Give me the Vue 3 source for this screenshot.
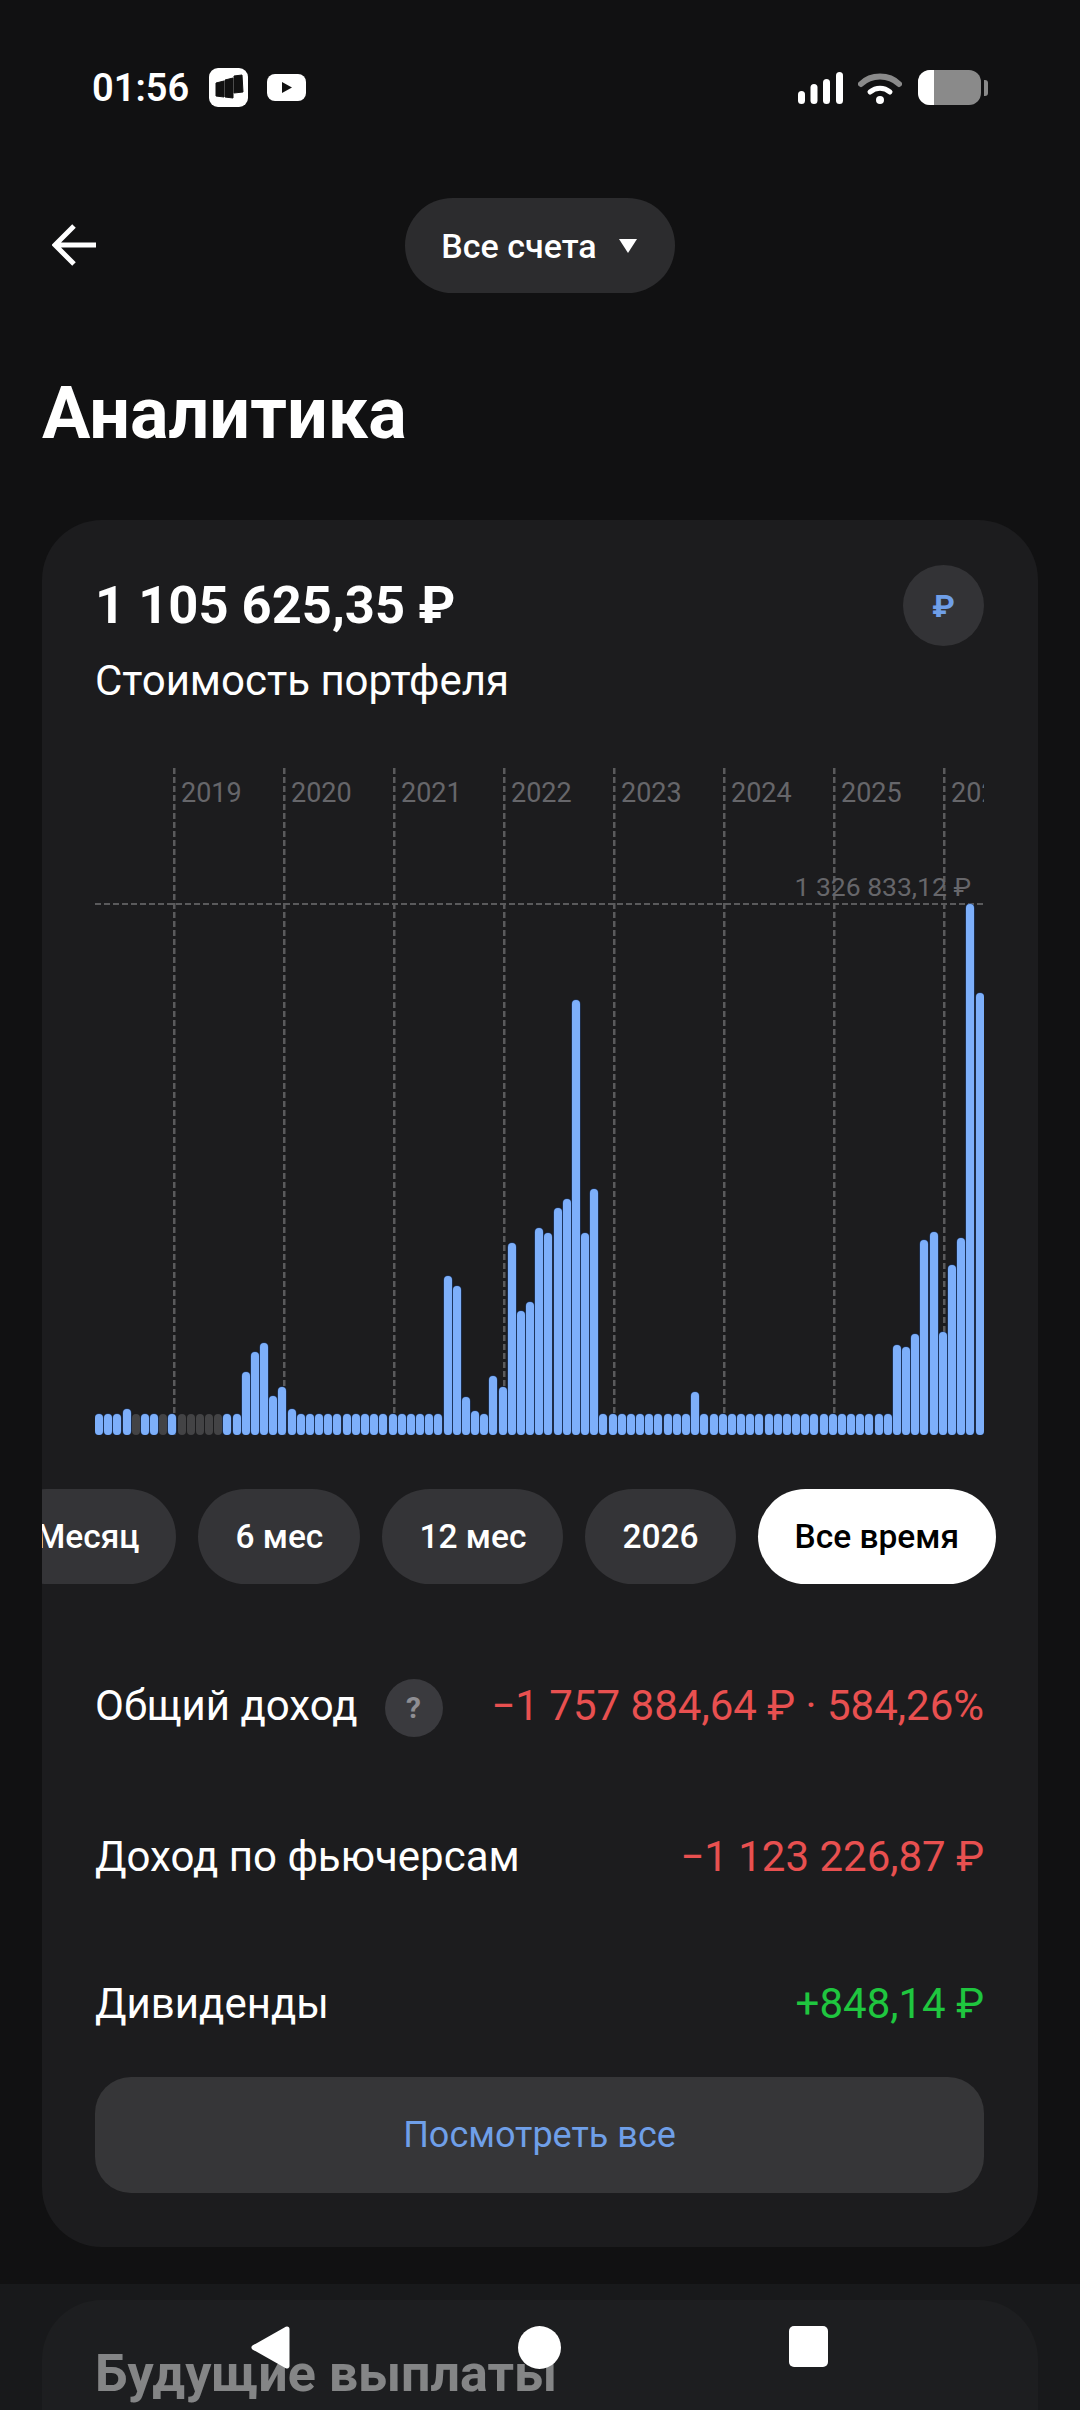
<template>
  <div class="page">
    <div class="status">
      <div class="status-left">
        <span class="time">01:56</span>
        <svg class="app-icon" width="39" height="39" viewBox="0 0 39 39">
          <rect width="39" height="39" rx="9" fill="#fff" />
          <path d="M7 15l8-2v16l-8-1zM16 12l8-2v20l-8-1zM25 8l8-1 1 17-9 1z" fill="#111" stroke="#111" stroke-linejoin="round" />
        </svg>
        <svg class="yt-icon" width="39" height="27" viewBox="0 0 39 27">
          <rect width="39" height="27" rx="8" fill="#fff" />
          <path d="M15 8l10 5.500-10 5.500z" fill="#111" />
        </svg>
      </div>
      <div class="status-right">
        <svg width="46" height="32" viewBox="0 0 46 32">
          <rect x="0" y="19" width="7" height="13" rx="3.500" fill="#fff" />
          <rect x="12.500" y="12" width="7" height="20" rx="3.500" fill="#fff" />
          <rect x="25" y="7" width="7" height="25" rx="3.500" fill="#fff" />
          <rect x="38" y="0" width="7" height="32" rx="3.500" fill="#fff" />
        </svg>
        <svg width="44" height="32" viewBox="0 0 44 32">
          <path d="M3 12C13 2 31 2 41 12" fill="none" stroke="#8a8a8a" stroke-width="6" stroke-linecap="round" />
          <path d="M12 20c6-5 14-5 20 0" fill="none" stroke="#fff" stroke-width="5" stroke-linecap="round" />
          <circle cx="22" cy="28" r="4" fill="#fff" />
        </svg>
        <div class="battery">
          <div class="battery-body"><div class="battery-fill"></div></div>
          <div class="battery-nub"></div>
        </div>
      </div>
    </div>

    <header class="header">
      <svg class="back" width="46" height="44" viewBox="0 0 46 44">
        <path d="M44 22H4M22 3L3 22l19 19" fill="none" stroke="#fff" stroke-width="5" />
      </svg>
      <div class="account-pill">
        <span>Все счета</span>
        <span class="caret"></span>
      </div>
    </header>

    <h1 class="title">Аналитика</h1>

    <section class="card">
      <div class="card-top">
        <div>
          <div class="amount">1 105 625,35 ₽</div>
          <div class="amount-label">Стоимость портфеля</div>
        </div>
        <div class="currency">₽</div>
      </div>

      <div class="chart">
        <div class="years">
          <div v-for="year in years" :key="year" class="year">{{ year }}</div>
        </div>
        <div class="max-line">
          <span class="max-value">1 326 833,12 ₽</span>
        </div>
        <div class="bars">
          <div
            v-for="(bar, i) in bars"
            :key="i"
            class="bar"
            :class="{ empty: bar.empty }"
            :style="{ height: bar.height + 'px' }"
          ></div>
        </div>
      </div>

      <div class="periods">
        <div v-for="p in periods" :key="p" class="period" :class="{ active: p === 'Все время' }">{{ p }}</div>
      </div>

      <div class="stat first">
        <div class="stat-label">
          <span>Общий доход</span>
          <span class="hint">?</span>
        </div>
        <span class="red">−1 757 884,64 ₽ · 584,26%</span>
      </div>
      <div class="stat second">
        <span>Доход по фьючерсам</span>
        <span class="red">−1 123 226,87 ₽</span>
      </div>
      <div class="stat third">
        <span>Дивиденды</span>
        <span class="green">+848,14 ₽</span>
      </div>

      <button class="more" type="button">Посмотреть все</button>
    </section>

    <section class="card next">
      <h2>Будущие выплаты</h2>
    </section>

    <nav class="navbar">
      <svg width="40" height="43" viewBox="0 0 40 43">
        <path d="M37 3L4 21.500 37 40z" fill="#fff" stroke="#fff" stroke-width="5" stroke-linejoin="round" />
      </svg>
      <svg width="43" height="43" viewBox="0 0 43 43"><circle cx="21.500" cy="21.500" r="21.500" fill="#fff" /></svg>
      <svg width="39" height="41" viewBox="0 0 39 41"><rect width="39" height="41" rx="5" fill="#fff" /></svg>
    </nav>
  </div>
</template>

<script setup>
const years = ['2019', '2020', '2021', '2022', '2023', '2024', '2025', '2026']
const periods = ['Месяц', '6 мес', '12 мес', '2026', 'Все время']

// y верхушек столбиков, остальные стоят на минимуме
const BASE = 1436
const DEFAULT_TOP = 1415
const tops = {
  3: 1410, 16: 1373, 17: 1353, 18: 1344, 19: 1397, 20: 1388, 21: 1410,
  38: 1277, 39: 1287, 40: 1398, 41: 1412, 43: 1377, 44: 1388, 45: 1244,
  46: 1312, 47: 1303, 48: 1229, 49: 1234, 50: 1209, 51: 1200, 52: 1001,
  53: 1234, 54: 1190, 65: 1393, 87: 1346, 88: 1348, 89: 1335, 90: 1241,
  91: 1233, 92: 1333, 93: 1266, 94: 1239, 95: 905, 96: 994
}
const emptyBars = [4, 7, 9, 10, 11, 12, 13]

const bars = Array.from({ length: 97 }, (_, i) => ({
  height: BASE - (tops[i] || DEFAULT_TOP),
  empty: emptyBars.includes(i)
}))
</script>

<style>
body {
  background: #111112;
}
</style>

<style scoped>
.page {
  position: relative;
  height: 2410px;
  overflow: hidden;
  background: #111112;
  color: #fff;
  font-family: Roboto, "Noto Sans", sans-serif;
}

.status {
  display: flex;
  justify-content: space-between;
  align-items: center;
  height: 65px;
  padding: 55px 92px 0 92px;
}

.status-left,
.status-right {
  display: flex;
  align-items: center;
}

.time {
  font-size: 38px;
  font-weight: 600;
  width: 117px;
}

.yt-icon {
  margin-left: 19px;
}

.status-right {
  gap: 14px;
}

.battery {
  display: flex;
  align-items: center;
  gap: 3px;
  margin-left: 2px;
}

.battery-body {
  width: 63px;
  height: 35px;
  border-radius: 12px;
  background: #8a8a8a;
  overflow: hidden;
}

.battery-fill {
  width: 16px;
  height: 100%;
  background: #fff;
}

.battery-nub {
  width: 4px;
  height: 16px;
  border-radius: 0 3px 3px 0;
  background: #8a8a8a;
}

.header {
  position: relative;
  display: flex;
  justify-content: center;
  margin-top: 78px;
}

.back {
  position: absolute;
  left: 52px;
  top: 25px;
}

.account-pill {
  display: flex;
  align-items: center;
  gap: 22px;
  height: 95px;
  padding: 0 38px 0 36px;
  border-radius: 48px;
  background: #2c2c2e;
  font-size: 34px;
  font-weight: 500;
}

.caret {
  width: 0;
  height: 0;
  border-left: 9.500px solid transparent;
  border-right: 9.500px solid transparent;
  border-top: 14px solid #fff;
}

.title {
  margin: 77px 0 0 42px;
  font-size: 72px;
  line-height: 88px;
  font-weight: 700;
}

.card {
  margin: 62px 42px 0;
  padding: 44px 54px 0 53px;
  height: 1727px;
  box-sizing: border-box;
  border-radius: 60px;
  background: #1c1c1e;
  overflow: hidden;
}

.card-top {
  display: flex;
  justify-content: space-between;
  align-items: flex-start;
}

.amount {
  margin-top: 11px;
  font-size: 52.500px;
  line-height: 60px;
  font-weight: 700;
}

.amount-label {
  margin-top: 23px;
  font-size: 42px;
  line-height: 46px;
}

.currency {
  display: flex;
  align-items: center;
  justify-content: center;
  width: 81px;
  height: 81px;
  margin-top: 1px;
  border-radius: 50%;
  background: #333336;
  color: #6f9fe8;
  font-size: 32px;
  font-weight: 700;
}

.chart {
  position: relative;
  height: 667px;
  margin-top: 64px;
  overflow: hidden;
}

.years {
  position: absolute;
  inset: 0;
  display: flex;
  padding-left: 78px;
}

.year {
  flex: 0 0 110px;
  box-sizing: border-box;
  padding: 9px 0 0 8px;
  font-size: 27px;
  line-height: 32px;
  color: #66666a;
  background: repeating-linear-gradient(to bottom, #5a5a5c 0 6px, transparent 6px 9px) left top / 2.500px 100% no-repeat;
}

.max-line {
  position: absolute;
  left: 0;
  right: 0;
  top: 135px;
  height: 2px;
  background: repeating-linear-gradient(to right, #5a5a5c 0 6px, transparent 6px 9px);
}

.max-value {
  position: absolute;
  right: 13px;
  bottom: 2px;
  font-size: 26.500px;
  line-height: 32px;
  color: #66666a;
  white-space: nowrap;
}

.bars {
  position: absolute;
  left: 0;
  right: 0;
  bottom: 0;
  display: flex;
  align-items: flex-end;
  justify-content: space-between;
}

.bar {
  flex: 0 0 8px;
  border-radius: 4px;
  background: #7dafFa;
  box-shadow: 0 0 0 0.5px #1f3f74;
}

.bar.empty {
  background: #434345;
  box-shadow: none;
}

.periods {
  display: flex;
  justify-content: flex-end;
  gap: 22px;
  margin: 54px -54px 0 -53px;
  padding-right: 42px;
}

.period {
  flex: 0 0 auto;
  height: 95px;
  line-height: 95px;
  padding: 0 37px;
  border-radius: 48px;
  background: #343437;
  font-size: 33.500px;
  font-weight: 500;
}

.period.active {
  background: #fff;
  color: #000;
}

.stat {
  display: flex;
  justify-content: space-between;
  align-items: center;
  font-size: 42px;
  line-height: 46px;
  white-space: nowrap;
}

.stat.first {
  margin-top: 91px;
}

.stat.second {
  margin-top: 97px;
}

.stat.third {
  margin-top: 101px;
}

.stat-label {
  display: flex;
  align-items: center;
  gap: 27px;
}

.hint {
  display: flex;
  align-items: center;
  justify-content: center;
  width: 58px;
  height: 58px;
  margin-top: 4px;
  border-radius: 50%;
  background: #3a3a3e;
  color: #8e8e93;
  font-size: 30px;
  font-weight: 700;
}

.red {
  color: #e85050;
}

.green {
  color: #1fc63f;
}

.more {
  display: block;
  width: 100%;
  height: 116px;
  margin-top: 50px;
  border: none;
  border-radius: 36px;
  background: #363638;
  color: #6f9fe8;
  font-family: inherit;
  font-size: 36px;
}

.card.next {
  margin-top: 53px;
  height: 200px;
}

.card.next h2 {
  margin: 0;
  font-size: 52px;
  line-height: 60px;
  font-weight: 700;
}

.navbar {
  position: absolute;
  left: 0;
  right: 0;
  bottom: 0;
  display: flex;
  align-items: flex-start;
  height: 126px;
  box-sizing: border-box;
  padding: 42px 0 0 250px;
  gap: 228px;
  background: rgba(31, 33, 34, 0.55);
}
</style>
